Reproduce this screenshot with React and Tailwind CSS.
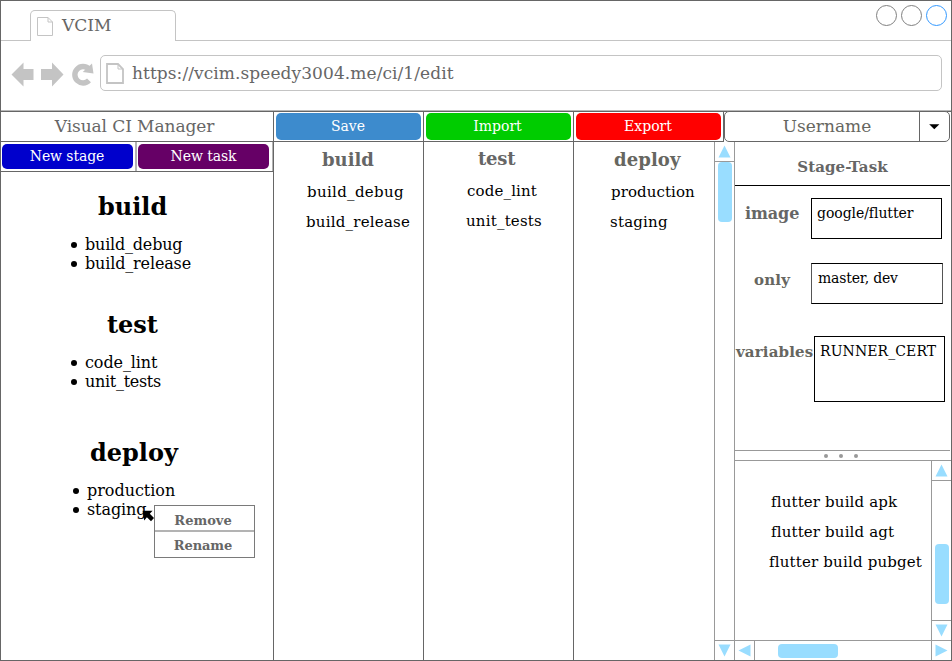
const ARROWS = {
  up: '9.5,3.5 15.5,15.5 3.5,15.5',
  down: '9.5,15.5 15.5,3.5 3.5,3.5',
  left: '3.5,9.5 15.5,3.5 15.5,15.5',
  right: '15.5,9.5 3.5,3.5 3.5,15.5',
};

function Arrow({ dir }) {
  return (
    <svg className="block h-[19px] w-[19px] shrink-0" viewBox="0 0 19 19">
      <polygon points={ARROWS[dir]} fill="#99ddff" />
    </svg>
  );
}

function VScroll({ className, thumb }) {
  return (
    <div className={`flex shrink-0 flex-col items-center ${className}`}>
      <div className="w-full border-b border-[#999]">
        <Arrow dir="up" />
      </div>
      <div className="w-full flex-1">
        <div className={`mx-auto h-[60px] w-[14px] rounded-[4px] bg-[#99ddff] ${thumb}`} />
      </div>
      <div className="w-full border-t border-[#999]">
        <Arrow dir="down" />
      </div>
    </div>
  );
}

function Browser() {
  return (
    <>
      <div className="flex h-10 shrink-0 items-end">
        <div className="w-[29px] self-stretch border-b border-[#c4c4c4]" />
        <div className="flex h-[31px] w-[146px] rounded-t-[5px] border border-b-0 border-[#c4c4c4] pl-[6px]">
          <svg className="mt-[6px] h-[19px] w-[16px]" viewBox="0 0 16 19" fill="none" stroke="#c4c4c4">
            <path d="M0.5 0.5H11L15.5 5V18.5H0.5Z" />
            <path d="M11 0.5V5H15.5" />
          </svg>
          <span className="mt-[4px] ml-[9px] text-[17px] leading-[20px] text-[#666]">VCIM</span>
        </div>
        <div className="flex flex-1 justify-end gap-1 self-stretch border-b border-[#c4c4c4] pt-1 pr-1">
          <i className="h-[21px] w-[21px] rounded-full border border-[#808080]" />
          <i className="h-[21px] w-[21px] rounded-full border border-[#808080]" />
          <i className="h-[21px] w-[21px] rounded-full border border-[#3399ff]" />
        </div>
      </div>
      <div className="flex h-[70px] shrink-0 border-b border-[#b8b8b8] pt-[14px] pl-[10px]">
        <svg className="mt-[6px] h-[26px] w-[84px]" viewBox="0 0 84 26" fill="#c4c4c4">
          <path d="M0.5 13.5L12.5 1.5V8H22.5V19H12.5V25.5Z" />
          <path d="M52.5 13.5L41 1.5V8H30V19H41V25.5Z" />
          <path d="M78 19.4A8.2 8.2 0 1 1 77.8 7.9" fill="none" stroke="#c4c4c4" strokeWidth="5.4" />
          <path d="M81 2.5L82.5 12.6L71.7 11Z" />
        </svg>
        <div className="ml-[5px] flex h-[36px] w-[842px] rounded-[5px] border border-[#c4c4c4] pl-[5px]">
          <svg className="mt-[7px] h-[21px] w-[18px]" viewBox="0 0 18 21" fill="none" stroke="#c4c4c4">
            <path d="M1 1H12L17 6V20H1Z" strokeWidth="1.8" />
            <path d="M12 1V6H17" />
          </svg>
          <span className="mt-[7px] ml-[8px] text-[17px] leading-[20px] tracking-[0.08px] text-[#666]">
            https://vcim.speedy3004.me/ci/1/edit
          </span>
        </div>
      </div>
    </>
  );
}

function Action({ label, color, inset = 'pl-[2px]' }) {
  return (
    <div className={`flex w-[150px] shrink-0 border-r border-b border-[#666] pt-px ${inset}`}>
      <button className={`h-[27px] w-[145px] rounded-[5px] pr-px pb-[2px] text-[14px] leading-[20px] text-white ${color}`}>
        {label}
      </button>
    </div>
  );
}

function Header() {
  return (
    <div className="flex h-[30px] shrink-0">
      <div className="w-[273px] shrink-0 border-r border-b border-[#666] pt-[4px] pr-[5px] text-center text-[17px] leading-[20px] tracking-[-0.08px] text-[#666]">
        Visual CI Manager
      </div>
      <Action label="Save" color="bg-[#3d8bcd]" />
      <Action label="Import" color="bg-[#00cc00]" inset="pl-[1.5px]" />
      <Action label="Export" color="bg-[#ff0000]" />
      <div className="-mt-px flex h-[31px] w-[226px] shrink-0 rounded-[5px] border border-[#666] bg-white">
        <div className="w-[195px] border-r border-[#666] pt-[4px] pl-[10px] text-center text-[17px] leading-[20px] text-[#666660]">
          Username
        </div>
        <svg className="mt-[12px] ml-[9px] h-[6px] w-[11px]" viewBox="0 0 11 6">
          <path d="M0.2 0.2H10.4L5.3 5.3Z" />
        </svg>
      </div>
    </div>
  );
}

function Stage({ name, items, title, list }) {
  return (
    <section>
      <h2 className={`text-[24px] leading-[28px] font-bold ${title}`}>{name}</h2>
      <ul className={`mt-[14px] text-[16px] leading-[19px] ${list}`}>
        {items.map(([text, tracking]) => (
          <li key={text} className="flex">
            <i className="mt-[7px] mr-[8px] h-[6px] w-[6px] rounded-full bg-black" />
            <span className={tracking}>{text}</span>
          </li>
        ))}
      </ul>
    </section>
  );
}

function Sidebar() {
  return (
    <div className="relative w-[273px] shrink-0 border-r border-[#666]">
      <div className="flex h-[30px] border-b border-[#666] pl-px text-[14px] leading-[20px] text-white">
        <button className="mt-[2px] h-[25px] w-[131px] rounded-[5px] bg-[#0000cc] pr-px pb-px tracking-[-0.1px]">New stage</button>
        <div className="ml-[2px] w-[2px] bg-[#b3b3b3]" />
        <button className="mt-[2px] ml-px h-[25px] w-[131px] rounded-[5px] bg-[#660066] pb-px tracking-[-0.1px]">New task</button>
        <div className="ml-auto w-px bg-[#b3b3b3]" />
      </div>
      <div className="flex flex-col pt-[21px]">
        <Stage
          name="build"
          items={[['build_debug', 'tracking-[-0.2px]'], ['build_release', 'tracking-[-0.15px]']]}
          title="pl-[97px]"
          list="pl-[70px]"
        />
        <div className="h-[38px]" />
        <Stage
          name="test"
          items={[['code_lint', 'tracking-[-0.1px]'], ['unit_tests', 'tracking-[-0.3px]']]}
          title="pl-[106px]"
          list="pl-[70px]"
        />
        <div className="h-[48px]" />
        <Stage
          name="deploy"
          items={[['production', 'tracking-[-0.03px]'], ['staging', 'tracking-[-0.1px]']]}
          title="pl-[89px]"
          list="pl-[72px]"
        />
      </div>
      <div className="absolute top-[363px] left-[153px] w-[101px] border border-[#7a7a7a] bg-white text-[13px] font-bold text-[#666]">
        <div className="h-[26px] border-b-2 border-[#b3b3b3] pt-[5px] pr-[3px] text-center leading-[20px]">Remove</div>
        <div className="h-[25px] pt-[4px] pr-[3px] text-center leading-[20px] tracking-[-0.1px]">Rename</div>
      </div>
      <svg className="absolute top-[368px] left-[141px] h-[13px] w-[13px]" viewBox="0 0 13 13">
        <path d="M0.6 0.8H10.6L7.8 3.7L12 8L9 11.3L4.9 7.2L2.2 10.5Z" />
      </svg>
    </div>
  );
}

function Column({ className, name, title, tasks }) {
  return (
    <div className={`shrink-0 ${className}`}>
      <h3 className={`text-[18px] leading-[22px] font-bold ${title}`}>{name}</h3>
      {tasks.map(([text, style]) => (
        <div key={text} className={`text-[15px] leading-[20px] ${style}`}>
          {text}
        </div>
      ))}
    </div>
  );
}

function Details() {
  return (
    <div className="flex w-[216px] shrink-0 flex-col">
      <div className="mr-[1px] h-[44px] border-b border-black pt-[15px] text-center text-[15px] leading-[20px] font-bold tracking-[0.08px] text-[#666]">
        Stage-Task
      </div>
      <div className="flex h-[65px] pt-[12px] pl-[10px]">
        <b className="w-[66px] shrink-0 pt-[6px] text-[16px] leading-[20px] tracking-[-0.1px] text-[#666]">image</b>
        <div className="h-[41px] w-[131px] border border-black pt-[4px] pl-[5px] text-[14px] leading-[20px] tracking-[-0.06px]">google/flutter</div>
      </div>
      <div className="flex h-[73px] pt-[12px] pl-[19px]">
        <b className="w-[57px] shrink-0 pt-[7px] text-[15px] leading-[20px] tracking-[0.2px] text-[#666660]">only</b>
        <div className="h-[41px] w-[132px] border border-x-[#555] border-y-black pt-[4px] pl-[6px] text-[14px] leading-[20px] tracking-[-0.2px]">master, dev</div>
      </div>
      <div className="mr-[1px] flex h-[127px] border-b border-[#999] pt-[12px] pl-px">
        <b className="w-[78px] shrink-0 pt-[6px] text-[15px] leading-[20px] tracking-[0.15px] text-[#666660]">variables</b>
        <div className="h-[66px] w-[131px] shrink-0 border border-black pt-[4px] pl-[5px] text-[14px] leading-[20px] tracking-[0.1px]">RUNNER_CERT</div>
      </div>
      <div className="flex h-[10px] shrink-0 justify-center gap-[11px] border-b border-[#999] pt-[2.5px] pr-[4px]">
        <i className="h-1 w-1 rounded-full bg-[#999]" />
        <i className="h-1 w-1 rounded-full bg-[#999]" />
        <i className="h-1 w-1 rounded-full bg-[#999]" />
      </div>
      <div className="flex h-[179px]">
        <div className="w-[196px] shrink-0 pt-[31px] text-[15px] leading-[20px] whitespace-nowrap">
          <div className="pl-[36px] tracking-[0.15px]">flutter build apk</div>
          <div className="mt-[10px] pl-[36px] tracking-[0.15px]">flutter build agt</div>
          <div className="mt-[10px] pl-[34px] tracking-[0.18px]">flutter build pubget</div>
        </div>
        <VScroll className="w-[20px] border-l border-[#999]" thumb="mt-[63px]" />
      </div>
      <div className="flex h-[20px] border-t border-[#999]">
        <div className="w-[20px] border-r border-[#999]">
          <Arrow dir="left" />
        </div>
        <div className="flex-1 pt-[2.5px] pl-[23px]">
          <div className="h-[14px] w-[60px] rounded-[4px] bg-[#99ddff]" />
        </div>
        <div className="w-[20px] border-l border-[#999]">
          <Arrow dir="right" />
        </div>
      </div>
    </div>
  );
}

export default function App() {
  return (
    <div className="flex h-[661px] w-[952px] flex-col overflow-hidden border border-[#666] bg-white font-['DejaVu_Serif',serif] text-black">
      <Browser />
      <div className="h-px shrink-0 bg-[#666]" />
      <Header />
      <div className="flex h-[518px] shrink-0">
        <Sidebar />
        <Column
          className="w-[150px] border-r border-[#666] pt-[7px]"
          name="build"
          title="text-[#666] pl-[48px]"
          tasks={[
            ['build_debug', 'pl-[33px] mt-[11px] tracking-[0.33px]'],
            ['build_release', 'pl-[32px] mt-[10px] tracking-[0.22px]'],
          ]}
        />
        <Column
          className="w-[150px] border-r border-[#666] pt-[6px]"
          name="test"
          title="text-[#666] pl-[54px] tracking-[-0.2px]"
          tasks={[
            ['code_lint', 'pl-[43px] mt-[11px] tracking-[0.15px]'],
            ['unit_tests', 'pl-[42px] mt-[10px] tracking-[0.2px]'],
          ]}
        />
        <Column
          className="w-[140px] pt-[7px]"
          name="deploy"
          title="text-[#666660] pl-[40px] tracking-[0.1px]"
          tasks={[
            ['production', 'pl-[37px] mt-[11px] tracking-[0.08px]'],
            ['staging', 'pl-[36px] mt-[10px] tracking-[0.2px]'],
          ]}
        />
        <VScroll className="w-[21px] border-x border-[#999]" thumb="-mt-[0.5px]" />
        <Details />
      </div>
    </div>
  );
}
